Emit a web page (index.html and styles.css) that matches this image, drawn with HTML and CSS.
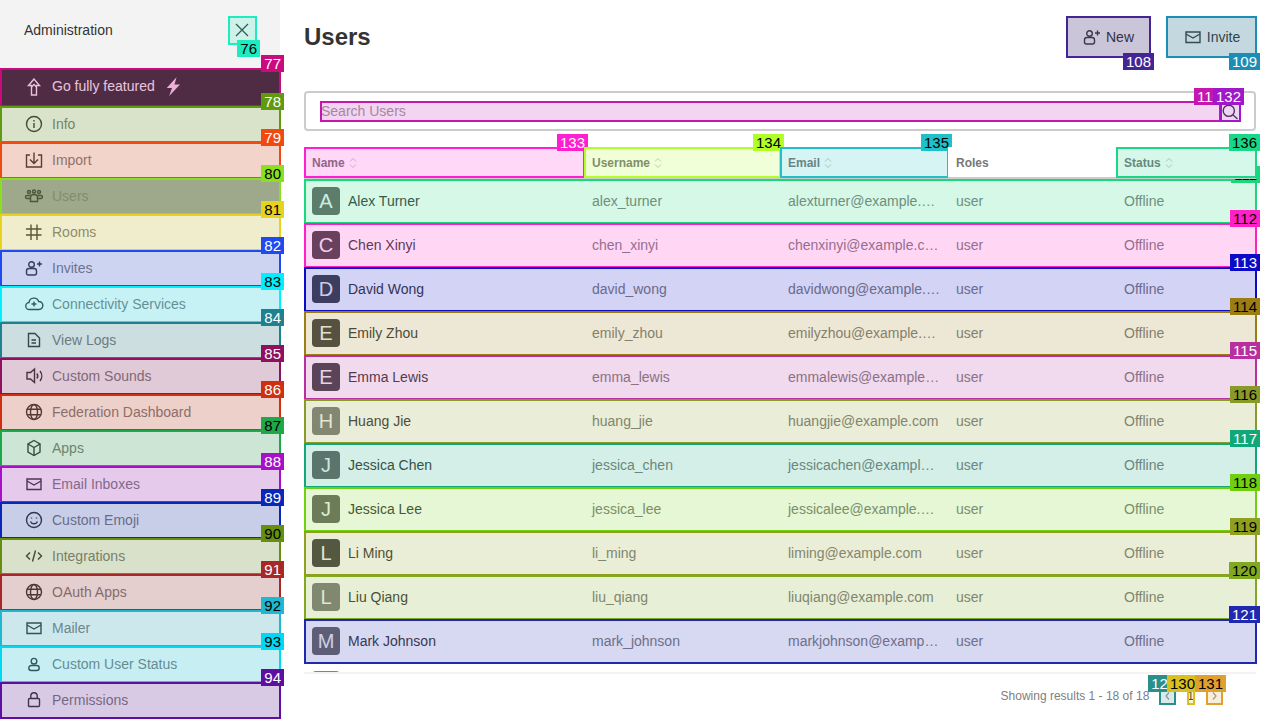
FILE: index.html
```html
<!DOCTYPE html>
<html lang="en">
<head>
<meta charset="utf-8">
<title>Users - Administration</title>
<link rel="stylesheet" href="styles.css">
</head>
<body>
<svg class="defs" aria-hidden="true">
  <symbol id="i-close" viewBox="0 0 20 20"><path d="M4 4l12 12M16 4L4 16"/></symbol>
  <symbol id="i-rocket" viewBox="0 0 20 20"><path d="M10 3L4.500 9.500h3V19h5V9.500h3z"/><path d="M7.500 11L10 8.500l2.500 2.500"/></symbol>
  <symbol id="i-bolt" viewBox="0 0 20 20"><path class="solid" d="M13.500 1.300L3.700 12h5.300L6.200 20 17 8.500h-5.500z"/></symbol>
  <symbol id="i-info" viewBox="0 0 20 20"><circle cx="10" cy="10" r="7.500"/><path d="M10 9v5M10 6v1.400"/></symbol>
  <symbol id="i-import" viewBox="0 0 20 20"><path d="M6 5H2.500v12h15V5H14"/><path d="M10 2.500V13M6 9.500l4 4 4-4"/></symbol>
  <symbol id="i-team" viewBox="0 0 20 20"><circle cx="5" cy="6" r="1.500"/><circle cx="10" cy="5.500" r="1.500"/><circle cx="15" cy="6" r="1.500"/><path d="M6.500 11a3.500 2.500 0 0 1 7 0v4.500h-7z"/><path d="M6 9.500H3a1.200 1.200 0 0 0 0 3h3M14 9.500h3a1.200 1.200 0 0 1 0 3h-3"/></symbol>
  <symbol id="i-hash" viewBox="0 0 20 20"><path d="M7 2.500v15.500M13 2.500v15.500M2 7h15.500M2 13h15.500"/></symbol>
  <symbol id="i-user-plus" viewBox="0 0 20 20"><circle cx="7.500" cy="6.500" r="2.800"/><path d="M2.500 13a2.500 2.500 0 0 1 2.500-2.500h5a2.500 2.500 0 0 1 2.500 2.500v2a2 2 0 0 1-2 2H4.500a2 2 0 0 1-2-2z"/><path d="M15.500 3.500v5M13 6h5"/></symbol>
  <symbol id="i-cloud" viewBox="0 0 20 20"><path d="M5.500 15.500a3.500 3.500 0 0 1-.5-7 5 5 0 0 1 9.700-1 4 4 0 0 1 .3 8z"/><path d="M10 7.500v5M7.500 10h5"/></symbol>
  <symbol id="i-file" viewBox="0 0 20 20"><path d="M4.500 3.500h6.500l4.500 4.500v8.500h-11z"/><path d="M7.500 10h4.500M7.500 13h4.500"/></symbol>
  <symbol id="i-sound" viewBox="0 0 20 20"><path d="M3 6.500h3.500l4-3.500v13.500l-4-3.500H3z"/><path d="M12.800 7.500a4 4 0 0 1 0 5M16 5a8 8 0 0 1 0 10"/></symbol>
  <symbol id="i-globe" viewBox="0 0 20 20"><circle cx="10" cy="10" r="7.500"/><ellipse cx="10" cy="10" rx="3.500" ry="7.500"/><path d="M3.200 7.200h13.600M3.200 12.800h13.600"/></symbol>
  <symbol id="i-box" viewBox="0 0 20 20"><path d="M10 2.500l6 3.500v8l-6 3.500L4 14V6z"/><path d="M4 6l6 3.500L16 6M10 9.500v8"/></symbol>
  <symbol id="i-mail" viewBox="0 0 20 20"><path d="M3 5h14v10.500H3z"/><path d="M3 7l7 4 7-4"/></symbol>
  <symbol id="i-smile" viewBox="0 0 20 20"><circle cx="10" cy="10" r="7.500"/><path d="M6.500 11.500a3.800 3.800 0 0 0 7 0M7.500 7.500v1M12.500 7.500v1"/></symbol>
  <symbol id="i-code" viewBox="0 0 20 20"><path d="M6 6.500L2.500 10 6 13.500M14 6.500l3.500 3.500-3.500 3.500M11.500 4.500l-3 11"/></symbol>
  <symbol id="i-user" viewBox="0 0 20 20"><circle cx="10" cy="7.200" r="2.800"/><path d="M4.800 14a2.500 2.500 0 0 1 2.500-2.500h5.400a2.500 2.500 0 0 1 2.500 2.500 2.500 2.500 0 0 1-2.500 2.500H7.300A2.500 2.500 0 0 1 4.800 14z"/></symbol>
  <symbol id="i-lock" viewBox="0 0 20 20"><rect x="4.500" y="8.500" width="11" height="8" rx="1"/><path d="M6.800 8.500V6a3.200 3.200 0 0 1 6.400 0v2.500"/></symbol>
  <symbol id="i-search" viewBox="0 0 20 20"><circle cx="8.800" cy="9.800" r="5.600"/><path d="M13 14l4.500 4"/></symbol>
  <symbol id="i-sort" viewBox="0 0 10 14"><path d="M2 5.500L5 2.500l3 3M2 8.500l3 3 3-3"/></symbol>
  <symbol id="i-left" viewBox="0 0 16 16"><path d="M10 4.500L7 8l3 3.500"/></symbol>
  <symbol id="i-right" viewBox="0 0 16 16"><path d="M7 4.500L10 8l-3 3.500"/></symbol>
</svg>

<div class="app">
  <aside class="sidebar">
    <header class="side-head">
      <span class="side-title">Administration</span>
      <button class="close"><svg class="icon"><use href="#i-close"/></svg><span class="ov c76"><span class="tag flip">76</span></span></button>
    </header>
    <nav class="nav">
      <a class="item promo"><svg class="icon"><use href="#i-rocket"/></svg><span>Go fully featured</span><svg class="icon bolt"><use href="#i-bolt"/></svg><span class="ov c77"><span class="tag">77</span></span></a>
      <a class="item"><svg class="icon"><use href="#i-info"/></svg><span>Info</span><span class="ov c78"><span class="tag">78</span></span></a>
      <a class="item"><svg class="icon"><use href="#i-import"/></svg><span>Import</span><span class="ov c79"><span class="tag">79</span></span></a>
      <a class="item active"><svg class="icon"><use href="#i-team"/></svg><span>Users</span><span class="ov c80"><span class="tag">80</span></span></a>
      <a class="item"><svg class="icon"><use href="#i-hash"/></svg><span>Rooms</span><span class="ov c81"><span class="tag">81</span></span></a>
      <a class="item"><svg class="icon"><use href="#i-user-plus"/></svg><span>Invites</span><span class="ov c82"><span class="tag">82</span></span></a>
      <a class="item"><svg class="icon"><use href="#i-cloud"/></svg><span>Connectivity Services</span><span class="ov c83"><span class="tag">83</span></span></a>
      <a class="item"><svg class="icon"><use href="#i-file"/></svg><span>View Logs</span><span class="ov c84"><span class="tag">84</span></span></a>
      <a class="item"><svg class="icon"><use href="#i-sound"/></svg><span>Custom Sounds</span><span class="ov c85"><span class="tag">85</span></span></a>
      <a class="item"><svg class="icon"><use href="#i-globe"/></svg><span>Federation Dashboard</span><span class="ov c86"><span class="tag">86</span></span></a>
      <a class="item"><svg class="icon"><use href="#i-box"/></svg><span>Apps</span><span class="ov c87"><span class="tag">87</span></span></a>
      <a class="item"><svg class="icon"><use href="#i-mail"/></svg><span>Email Inboxes</span><span class="ov c88"><span class="tag">88</span></span></a>
      <a class="item"><svg class="icon"><use href="#i-smile"/></svg><span>Custom Emoji</span><span class="ov c89"><span class="tag">89</span></span></a>
      <a class="item"><svg class="icon"><use href="#i-code"/></svg><span>Integrations</span><span class="ov c90"><span class="tag">90</span></span></a>
      <a class="item"><svg class="icon"><use href="#i-globe"/></svg><span>OAuth Apps</span><span class="ov c91"><span class="tag">91</span></span></a>
      <a class="item"><svg class="icon"><use href="#i-mail"/></svg><span>Mailer</span><span class="ov c92"><span class="tag">92</span></span></a>
      <a class="item"><svg class="icon"><use href="#i-user"/></svg><span>Custom User Status</span><span class="ov c93"><span class="tag">93</span></span></a>
      <a class="item"><svg class="icon"><use href="#i-lock"/></svg><span>Permissions</span><span class="ov c94"><span class="tag">94</span></span></a>
    </nav>
  </aside>

  <main class="main">
    <header class="page-head">
      <h1 class="title">Users</h1>
      <div class="actions">
        <button class="btn"><svg class="icon"><use href="#i-user-plus"/></svg>New<span class="ov c108"><span class="tag flip">108</span></span></button>
        <button class="btn btn-invite"><svg class="icon"><use href="#i-mail"/></svg>Invite<span class="ov c109"><span class="tag flip">109</span></span></button>
      </div>
    </header>

    <div class="search">
      <label class="search-field"><input class="search-input" placeholder="Search Users"><span class="ov c110"><span class="tag">110</span></span></label>
      <span class="search-btn"><svg class="icon"><use href="#i-search"/></svg><span class="ov c132"><span class="tag">132</span></span></span>
    </div>

    <div class="table">
      <div class="thead grid">
        <div class="th">Name<svg class="sort"><use href="#i-sort"/></svg><span class="ov c133"><span class="tag">133</span></span></div>
        <div class="th">Username<svg class="sort"><use href="#i-sort"/></svg><span class="ov c134"><span class="tag">134</span></span></div>
        <div class="th">Email<svg class="sort"><use href="#i-sort"/></svg><span class="ov c135"><span class="tag">135</span></span></div>
        <div class="th">Roles</div>
        <div class="th">Status<svg class="sort"><use href="#i-sort"/></svg><span class="ov c136"><span class="tag">136</span></span></div>
      </div>
      <div class="tbody">
        <div class="row grid"><div class="td who"><span class="avatar mid">A</span><span class="name">Alex Turner</span></div><div class="td">alex_turner</div><div class="td">alexturner@example.com</div><div class="td">user</div><div class="td">Offline</div><span class="ov c111"><span class="tag">111</span></span></div>
        <div class="row grid"><div class="td who"><span class="avatar dark">C</span><span class="name">Chen Xinyi</span></div><div class="td">chen_xinyi</div><div class="td">chenxinyi@example.com</div><div class="td">user</div><div class="td">Offline</div><span class="ov c112"><span class="tag">112</span></span></div>
        <div class="row grid"><div class="td who"><span class="avatar dark">D</span><span class="name">David Wong</span></div><div class="td">david_wong</div><div class="td">davidwong@example.com</div><div class="td">user</div><div class="td">Offline</div><span class="ov c113"><span class="tag">113</span></span></div>
        <div class="row grid"><div class="td who"><span class="avatar dark">E</span><span class="name">Emily Zhou</span></div><div class="td">emily_zhou</div><div class="td">emilyzhou@example.com</div><div class="td">user</div><div class="td">Offline</div><span class="ov c114"><span class="tag">114</span></span></div>
        <div class="row grid"><div class="td who"><span class="avatar dark">E</span><span class="name">Emma Lewis</span></div><div class="td">emma_lewis</div><div class="td">emmalewis@example.com</div><div class="td">user</div><div class="td">Offline</div><span class="ov c115"><span class="tag">115</span></span></div>
        <div class="row grid"><div class="td who"><span class="avatar light">H</span><span class="name">Huang Jie</span></div><div class="td">huang_jie</div><div class="td">huangjie@example.com</div><div class="td">user</div><div class="td">Offline</div><span class="ov c116"><span class="tag">116</span></span></div>
        <div class="row grid"><div class="td who"><span class="avatar mid">J</span><span class="name">Jessica Chen</span></div><div class="td">jessica_chen</div><div class="td">jessicachen@example.com</div><div class="td">user</div><div class="td">Offline</div><span class="ov c117"><span class="tag">117</span></span></div>
        <div class="row grid"><div class="td who"><span class="avatar mid">J</span><span class="name">Jessica Lee</span></div><div class="td">jessica_lee</div><div class="td">jessicalee@example.com</div><div class="td">user</div><div class="td">Offline</div><span class="ov c118"><span class="tag">118</span></span></div>
        <div class="row grid"><div class="td who"><span class="avatar dark">L</span><span class="name">Li Ming</span></div><div class="td">li_ming</div><div class="td">liming@example.com</div><div class="td">user</div><div class="td">Offline</div><span class="ov c119"><span class="tag">119</span></span></div>
        <div class="row grid"><div class="td who"><span class="avatar light">L</span><span class="name">Liu Qiang</span></div><div class="td">liu_qiang</div><div class="td">liuqiang@example.com</div><div class="td">user</div><div class="td">Offline</div><span class="ov c120"><span class="tag">120</span></span></div>
        <div class="row grid"><div class="td who"><span class="avatar mid">M</span><span class="name">Mark Johnson</span></div><div class="td">mark_johnson</div><div class="td">markjohnson@example.com</div><div class="td">user</div><div class="td">Offline</div><span class="ov c121"><span class="tag">121</span></span></div>
        <div class="row grid"><div class="td who"><span class="avatar light"></span></div></div>
      </div>
    </div>

    <footer class="pager">
      <span class="results">Showing results 1 - 18 of 18</span>
      <span class="page-btn"><svg class="chev"><use href="#i-left"/></svg><span class="ov c129"><span class="tag">129</span></span></span>
      <span class="page-num">1<span class="ov c130"><span class="tag">130</span></span></span>
      <span class="page-btn"><svg class="chev"><use href="#i-right"/></svg><span class="ov c131"><span class="tag">131</span></span></span>
    </footer>
  </main>
</div>
</body>
</html>
```

FILE: styles.css
```css
* { box-sizing: border-box; }

html, body {
  margin: 0;
  height: 100%;
  overflow: hidden;
  background: #fff;
  font-family: "Liberation Sans", Arial, sans-serif;
  font-size: 14px;
  color: #3d3d3d;
}

.defs { display: none; }

.icon {
  width: 20px;
  height: 20px;
  flex: none;
  fill: none;
  stroke: currentColor;
  stroke-width: 1.4;
  color: #3b3b3b;
}
.solid { fill: currentColor; stroke: none; }

.app { display: flex; height: 720px; }

/* Annotation overlay */
.ov {
  position: absolute;
  top: 0;
  left: 0;
  right: -1px;
  bottom: -1px;
  border: 2px solid rgb(var(--c));
  background: rgba(var(--c), .18);
}
.tag {
  position: absolute;
  top: -15px;
  right: -5px;
  padding: 0 3px;
  font: 15px/17px "Liberation Sans", Arial, sans-serif;
  white-space: nowrap;
  background: rgb(var(--c));
  color: var(--t, #fff);
}
.tag.flip { top: auto; bottom: -14px; }

.c76 { --c: 28, 236, 192; --t: #000; }
.c77 { --c: 204, 10, 128; }
.c78 { --c: 95, 154, 16; }
.c79 { --c: 240, 74, 16; }
.c80 { --c: 138, 224, 31; --t: #000; }
.c81 { --c: 230, 210, 31; --t: #000; }
.c82 { --c: 31, 74, 240; }
.c83 { --c: 0, 240, 255; --t: #000; }
.c84 { --c: 31, 128, 144; }
.c85 { --c: 144, 16, 96; }
.c86 { --c: 208, 48, 15; }
.c87 { --c: 31, 168, 74; --t: #000; }
.c88 { --c: 168, 15, 200; }
.c89 { --c: 10, 40, 184; }
.c90 { --c: 102, 143, 16; --t: #000; }
.c91 { --c: 168, 40, 40; }
.c92 { --c: 32, 184, 208; --t: #000; }
.c93 { --c: 0, 216, 245; --t: #000; }
.c94 { --c: 92, 15, 160; }
.c108 { --c: 67, 37, 150; }
.c109 { --c: 28, 142, 182; }
.c110 { --c: 196, 23, 176; }
.c111 { --c: 28, 214, 124; --t: #000; }
.c112 { --c: 255, 32, 200; --t: #000; }
.c113 { --c: 10, 10, 200; }
.c114 { --c: 155, 125, 20; --t: #000; }
.c115 { --c: 184, 48, 160; }
.c116 { --c: 138, 154, 40; --t: #000; }
.c117 { --c: 16, 168, 120; }
.c118 { --c: 112, 208, 16; --t: #000; }
.c119 { --c: 143, 160, 32; --t: #000; }
.c120 { --c: 128, 168, 32; --t: #000; }
.c121 { --c: 32, 40, 176; }
.c129 { --c: 40, 144, 140; }
.c130 { --c: 216, 192, 32; --t: #000; }
.c131 { --c: 224, 160, 48; --t: #000; }
.c132 { --c: 160, 24, 200; }
.c133 { --c: 255, 31, 208; }
.c134 { --c: 176, 255, 40; --t: #000; }
.c135 { --c: 31, 192, 200; --t: #000; }
.c136 { --c: 24, 216, 136; --t: #000; }

/* Sidebar */
.sidebar {
  width: 280px;
  flex: none;
  display: flex;
  flex-direction: column;
  background: #f3f3f3;
}
.side-head {
  height: 68px;
  flex: none;
  display: flex;
  justify-content: space-between;
  align-items: flex-start;
  padding: 16px 24px 0;
}
.side-title { line-height: 28px; color: #333; }
.close {
  position: relative;
  width: 28px;
  height: 28px;
  padding: 0;
  border: 0;
  background: none;
  display: flex;
  align-items: center;
  justify-content: center;
}
.close .icon { stroke-width: 1.3; }

.item {
  position: relative;
  height: 36px;
  display: flex;
  align-items: center;
  gap: 8px;
  padding-left: 24px;
  color: #7c7c7c;
}
.item.promo {
  height: 38px;
  padding-bottom: 2px;
  background: #353437;
  color: #f0ebf0;
}
.promo .icon { color: #f0ebf0; }
.promo .bolt { color: #f3d4ea; }
.item.active { background: #a29ea1; }

/* Main */
.main {
  flex: 1;
  min-width: 0;
  display: flex;
  flex-direction: column;
  padding: 16px 24px 0;
}
.page-head {
  display: flex;
  justify-content: space-between;
  align-items: center;
  height: 41px;
  margin-bottom: 34px;
}
.title {
  margin: 0;
  padding-top: 1px;
  font-size: 24px;
  line-height: 32px;
  font-weight: 700;
  color: #333;
}
.actions { display: flex; gap: 16px; }
.btn {
  position: relative;
  height: 41px;
  padding: 0 16px;
  display: flex;
  align-items: center;
  justify-content: center;
  gap: 4px;
  border: 0;
  background: #e8e8e8;
  font: 14px "Liberation Sans", Arial, sans-serif;
  color: #333;
}
.btn-invite { width: 90px; padding-right: 15px; }

.search {
  height: 40px;
  flex: none;
  display: flex;
  align-items: center;
  padding: 0 14px;
  border: 2px solid #ccc;
  border-radius: 4px;
  margin-bottom: 16px;
}
.search-field { position: relative; flex: 1; display: flex; height: 20px; }
.search-input {
  flex: 1;
  width: 100%;
  border: 0;
  outline: 0;
  padding: 0 1px;
  background: none;
  font: 14px/20px "Liberation Sans", Arial, sans-serif;
  color: #333;
}
.search-input::placeholder { color: #a0a0a0; opacity: 1; }
.search-btn { position: relative; display: flex; width: 20px; height: 20px; }

/* Table */
.grid {
  display: grid;
  grid-template-columns: 280px 196px 168px 168px 140px;
}
.thead { position: relative; z-index: 2; height: 32px; }
.th {
  position: relative;
  display: flex;
  align-items: center;
  gap: 3px;
  padding: 2px 0 0 8px;
  border-bottom: 2px solid #ccc;
  background: #fff;
  font-size: 12px;
  font-weight: 700;
  color: #777;
}
.sort {
  width: 10px;
  height: 14px;
  fill: none;
  stroke: #c4c4c4;
  stroke-width: 1;
}
.tbody {
  height: 493px;
  clip-path: inset(-20px -4px 0 0);
}
.row { position: relative; height: 44px; align-items: center; }
.td {
  padding: 0 8px;
  overflow: hidden;
  white-space: nowrap;
  text-overflow: ellipsis;
  color: #808080;
}
.who { display: flex; align-items: center; gap: 8px; }
.name { color: #3d3d3d; }
.avatar {
  width: 28px;
  height: 28px;
  flex: none;
  display: flex;
  align-items: center;
  justify-content: center;
  border-radius: 4px;
  font-size: 20px;
  color: #f4f4f4;
}
.avatar.dark { background: #484848; }
.avatar.mid { background: #6c6a6a; }
.avatar.light { background: #828282; }

.pager {
  height: 46px;
  flex: none;
  display: flex;
  align-items: center;
  justify-content: flex-end;
  gap: 12px;
  padding: 0 34px 0 0;
  border-top: 2px solid #f3f3f3;
  font-size: 12px;
}
.results { margin-right: -2px; color: #808080; }
.page-btn, .page-num { position: relative; height: 16px; display: flex; align-items: center; }
.page-btn { width: 16px; }
.page-num { color: #333; }
.chev { width: 16px; height: 16px; fill: none; stroke: #999; stroke-width: 1.2; }
```
